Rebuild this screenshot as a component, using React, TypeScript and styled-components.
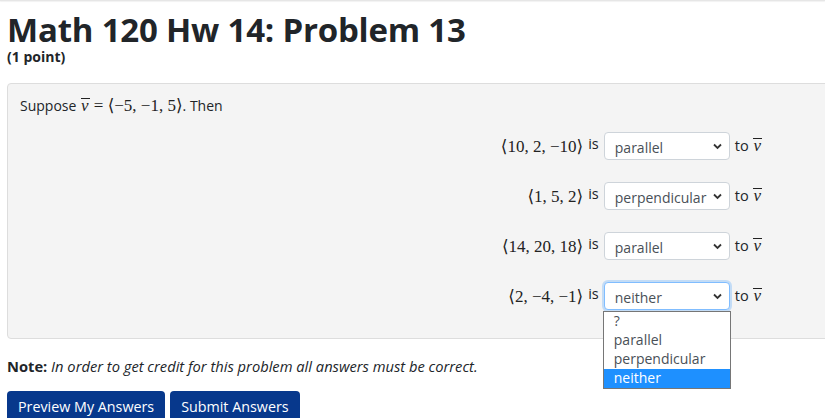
import React from "react";
import styled, { createGlobalStyle } from "styled-components";

const GlobalStyle = createGlobalStyle`
	html, body {
		margin: 0;
		padding: 0;
		background: #ffffff;
		overflow: hidden;
	}
	body {
		font-family: "Open Sans", "Noto Sans", sans-serif;
		color: #212529;
	}
`;

const TopBar = styled.div`
	height: 1px;
	background: #e6e6e6;
	box-shadow: 0 1px 1px rgba(0, 0, 0, 0.06);
`;

const Page = styled.main`
	padding: 0 7px;
	width: 860px;
`;

const Title = styled.h1`
	margin: 12px 0 0;
	font-size: 33px;
	font-weight: 700;
	line-height: 34px;
	color: #212529;
	letter-spacing: -0.2px;
`;

const Points = styled.div`
	margin-top: 2px;
	font-size: 14px;
	font-weight: 700;
	line-height: 16px;
	margin-bottom: 18px;
`;

const ProblemBox = styled.div`
	background: #f4f4f4;
	border: 1px solid #dddddd;
	border-radius: 4px;
	padding: 12px 104px 28px 12px;
`;

const Intro = styled.p`
	margin: 0 0 16px;
	font-size: 14px;
	line-height: 20px;
`;

const Rows = styled.div`
	display: flex;
	flex-direction: column;
	align-items: flex-end;
	gap: 22px;
`;

const Row = styled.div`
	display: flex;
	align-items: center;
	gap: 5px;
	font-size: 14.5px;
	height: 28px;
`;

const MathText = styled.span`
	font-family: "Liberation Serif", "DejaVu Serif", serif;
	font-size: 17px;
	color: #222;
	white-space: nowrap;
`;

const Vec = styled.span`
	position: relative;
	font-style: italic;
	display: inline-block;
	padding: 0 1px;
	&::before {
		content: "";
		position: absolute;
		left: 1px;
		right: 0;
		top: 2px;
		height: 1px;
		background: #222;
	}
`;

const Label = styled.span`
	position: relative;
	top: -3px;
`;

const SelectWrap = styled.div`
	position: relative;
	width: 126px;
	height: 28px;
`;

const SelectBox = styled.div<{ $focused?: boolean }>`
	box-sizing: border-box;
	width: 100%;
	height: 100%;
	background: #ffffff;
	border: 1px solid ${(p) => (p.$focused ? "#80bdff" : "#ced4da")};
	border-radius: 4px;
	box-shadow: ${(p) => (p.$focused ? "0 0 0 2px rgba(0, 123, 255, 0.2)" : "none")};
	display: flex;
	align-items: center;
	padding: 3px 0 0 10px;
	font-size: 14px;
	color: #495057;
`;

const Chevron = styled.svg`
	position: absolute;
	right: 8px;
	top: 11px;
	width: 9px;
	height: 7px;
`;

const Dropdown = styled.ul`
	position: absolute;
	left: -1px;
	top: 29px;
	width: 128px;
	margin: 0;
	padding: 0;
	list-style: none;
	background: #ffffff;
	border: 1px solid #767676;
	box-sizing: border-box;
	z-index: 5;
	font-size: 14px;
`;

const Option = styled.li<{ $active?: boolean }>`
	height: 19px;
	line-height: 18px;
	padding-left: 10px;
	background: ${(p) => (p.$active ? "#1e90ff" : "transparent")};
	color: ${(p) => (p.$active ? "#ffffff" : "#495057")};
`;

const Note = styled.p`
	margin: 17px 0 0;
	font-size: 14.7px;
	line-height: 20px;
	em {
		font-style: italic;
	}
`;

const Buttons = styled.div`
	display: flex;
	gap: 5px;
	margin-top: 15px;
`;

const Button = styled.button`
	background: #07388c;
	color: #ffffff;
	border: none;
	border-radius: 4px;
	padding: 6px 11px 12px;
	font-family: inherit;
	font-size: 14.3px;
	line-height: 20px;
`;

const V = () => (
	<MathText>
		<Vec>v</Vec>
	</MathText>
);

const OPTIONS = ["?", "parallel", "perpendicular", "neither"];

const rows = [
	{ vec: "⟨10, 2, −10⟩", value: "parallel" },
	{ vec: "⟨1, 5, 2⟩", value: "perpendicular" },
	{ vec: "⟨14, 20, 18⟩", value: "parallel" },
	{ vec: "⟨2, −4, −1⟩", value: "neither", open: true },
];

export default function App() {
	return (
		<>
			<GlobalStyle />
			<TopBar />
			<Page>
				<Title>Math 120 Hw 14: Problem 13</Title>
				<Points>(1 point)</Points>
				<ProblemBox>
					<Intro>
						Suppose{" "}
						<MathText>
							<Vec>v</Vec> = ⟨−5, −1, 5⟩
						</MathText>
						. Then
					</Intro>
					<Rows>
						{rows.map((r) => (
							<Row key={r.vec}>
								<MathText>{r.vec}</MathText>
								<Label>is</Label>
								<SelectWrap>
									<SelectBox $focused={r.open}>{r.value}</SelectBox>
									<Chevron viewBox="0 0 9 7">
										<path d="M1 1.5 L4.5 5 L8 1.5" fill="none" stroke="#333" strokeWidth="1.8" />
									</Chevron>
									{r.open && (
										<Dropdown>
											{OPTIONS.map((o) => (
												<Option key={o} $active={o === r.value}>
													{o}
												</Option>
											))}
										</Dropdown>
									)}
								</SelectWrap>
								<span>
									to <V />
								</span>
							</Row>
						))}
					</Rows>
				</ProblemBox>
				<Note>
					<strong>Note:</strong>{" "}
					<em>In order to get credit for this problem all answers must be correct.</em>
				</Note>
				<Buttons>
					<Button>Preview My Answers</Button>
					<Button>Submit Answers</Button>
				</Buttons>
			</Page>
		</>
	);
}
